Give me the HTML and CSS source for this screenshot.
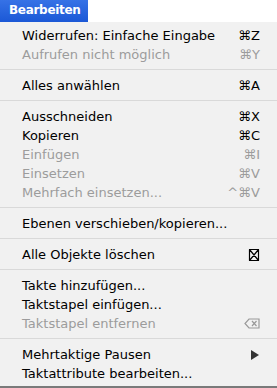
FILE: index.html
```html
<!DOCTYPE html>
<html>
<head>
<meta charset="utf-8">
<link rel="stylesheet" href="styles.css">
</head>
<body>
<div class="bar"><span class="title">Bearbeiten</span></div>
<ul class="menu">
  <li class="item"><span class="label">Widerrufen: Einfache Eingabe</span><span class="key">⌘Z</span></li>
  <li class="item off"><span class="label">Aufrufen nicht möglich</span><span class="key">⌘Y</span></li>
  <li class="sep"></li>
  <li class="item"><span class="label">Alles anwählen</span><span class="key">⌘A</span></li>
  <li class="sep"></li>
  <li class="item"><span class="label">Ausschneiden</span><span class="key">⌘X</span></li>
  <li class="item"><span class="label">Kopieren</span><span class="key">⌘C</span></li>
  <li class="item off"><span class="label">Einfügen</span><span class="key">⌘I</span></li>
  <li class="item off"><span class="label">Einsetzen</span><span class="key">⌘V</span></li>
  <li class="item off"><span class="label">Mehrfach einsetzen...</span><span class="key">^⌘V</span></li>
  <li class="sep"></li>
  <li class="item"><span class="label">Ebenen verschieben/kopieren...</span></li>
  <li class="sep"></li>
  <li class="item"><span class="label">Alle Objekte löschen</span><span class="key">
    <svg class="clr" width="12" height="14" viewBox="0 0 12 14"><path d="M1 1.5h10M1 12.5h10M1.5 1.5v11M10.5 1.5v11M1.5 1.5l9 11M10.5 1.5l-9 11" fill="none" stroke="#000" stroke-width="1.2"/></svg></span></li>
  <li class="sep"></li>
  <li class="item"><span class="label">Takte hinzufügen...</span></li>
  <li class="item"><span class="label">Taktstapel einfügen...</span></li>
  <li class="item off"><span class="label">Taktstapel entfernen</span><span class="key">
    <svg class="del" width="16" height="11" viewBox="0 0 16 11"><path d="M5 1h10v9H5L1 5.5z" fill="none" stroke="#999" stroke-width="1.2"/><path d="M8 3l4.5 5M12.5 3L8 8" stroke="#999" stroke-width="1.2"/></svg></span></li>
  <li class="sep"></li>
  <li class="item"><span class="label">Mehrtaktige Pausen</span><span class="key"><span class="tri"></span></span></li>
  <li class="item"><span class="label">Taktattribute bearbeiten...</span></li>
</ul>
</body>
</html>
```
FILE: styles.css
```css
html, body {
  margin: 0;
  padding: 0;
  background: #ffffff;
}
body {
  width: 277px;
  height: 388px;
  overflow: hidden;
  font-family: "DejaVu Sans", sans-serif;
  font-size: 13px;
}
.bar {
  height: 22px;
  display: flex;
  background: #ffffff;
}
.title {
  width: 79px;
  padding-left: 9px;
  background: linear-gradient(#3672e6, #1b58d6);
  color: #ffffff;
  font-weight: bold;
  font-size: 12px;
  letter-spacing: -0.3px;
  line-height: 21px;
  white-space: nowrap;
  overflow: hidden;
}
.menu {
  list-style: none;
  margin: 0;
  padding: 4px 0 3px 0;
  background: #f1f1f1;
  border-bottom: 2px solid #7a7a7a;
}
.item {
  display: flex;
  justify-content: space-between;
  align-items: center;
  height: 19px;
  line-height: 19px;
  padding: 0 17px 0 22px;
  color: #000000;
}
.item.off {
  color: #9c9c9c;
}
.key {
  display: flex;
  align-items: center;
}
.sep {
  height: 1px;
  margin: 5px 0 6px 0;
  background: #d9d9d9;
}
.tri {
  width: 0;
  height: 0;
  border-top: 5px solid transparent;
  border-bottom: 5px solid transparent;
  border-left: 8px solid #333333;
  margin-right: 1px;
}
```
